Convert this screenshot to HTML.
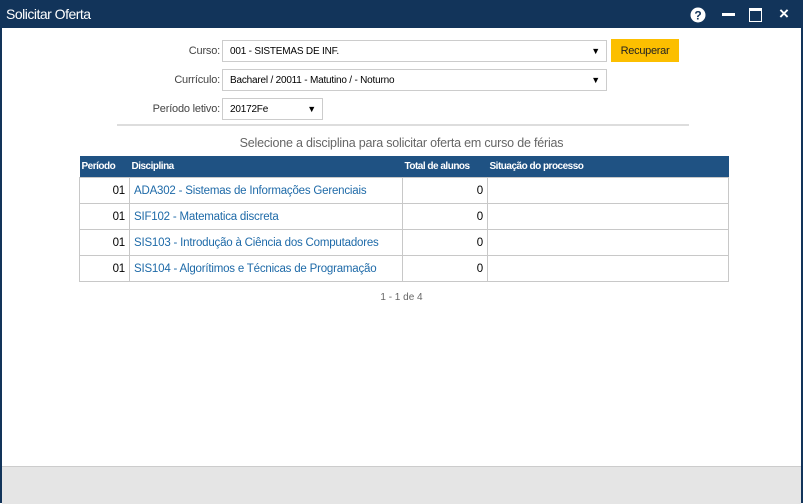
<!DOCTYPE html><html><head><style>
body{margin:0;width:803px;height:503px;overflow:hidden;font-family:"Liberation Sans",sans-serif;background:#fff;position:relative}
.win{position:absolute;left:0;top:0;width:799px;height:503px;border-left:2px solid #12345a;border-right:2px solid #12345a}
.title{position:absolute;left:0;top:0;width:803px;height:28px;background:#12345a;color:#fff;font-size:14px;line-height:28px}
.title span{position:absolute;left:6px;letter-spacing:-0.5px}
.bottom{position:absolute;left:2px;top:466px;width:799px;height:37px;background:#e5e5e5;border-top:1px solid #ccc}
.lbl{position:absolute;font-size:11px;color:#444;text-align:right;width:120px;letter-spacing:-0.2px}
.sel{position:absolute;border:1px solid #ccc;height:22px;font-size:10px;line-height:21px;padding-left:7px;box-sizing:border-box;color:#000;letter-spacing:-0.2px}
.sel i{position:absolute;right:6px;top:0;font-style:normal;font-size:9px}
.btn{position:absolute;left:611px;top:39px;width:68px;height:23px;background:#fcbf00;font-size:11px;line-height:24px;text-align:center;color:#222;letter-spacing:-0.3px}
table{position:absolute;left:79px;top:156px;border-collapse:collapse;font-size:11.5px;table-layout:fixed;width:649px}
th{background:#1f5283;color:#fff;font-weight:bold;font-size:10px;text-align:left;height:21px;padding:0 2px;letter-spacing:-0.5px;white-space:nowrap;overflow:hidden}
td{border:1px solid #c8c8c8;height:25px;padding:0 4px;white-space:nowrap;overflow:hidden;letter-spacing:-0.2px}
td.n{text-align:right}
td a{color:#1e6aa8}
</style></head><body>
<div class="win"></div>
<div class="title"><span>Solicitar Oferta</span>
<svg style="position:absolute;left:690px;top:7px" width="16" height="16"><circle cx="8" cy="8" r="7.5" fill="#fff"/><text x="8" y="12.5" font-size="12" font-weight="bold" text-anchor="middle" fill="#12345a" font-family="Liberation Sans">?</text></svg>
<div style="position:absolute;left:722px;top:13px;width:13px;height:3px;background:#fff"></div>
<div style="position:absolute;left:749px;top:8px;width:13px;height:14px;border:1.5px solid #fff;border-top-width:3px;box-sizing:border-box"></div>
<div style="position:absolute;left:779px;top:0;font-weight:bold;font-size:17px">×</div>
</div>
<div class="lbl" style="left:100px;top:45px">Curso:</div>
<div class="sel" style="left:222px;top:40px;width:385px">001 - SISTEMAS DE INF.<i>▼</i></div>
<div class="btn">Recuperar</div>
<div class="lbl" style="left:100px;top:74px">Currículo:</div>
<div class="sel" style="left:222px;top:69px;width:385px">Bacharel / 20011 - Matutino / - Noturno<i>▼</i></div>
<div class="lbl" style="left:100px;top:103px">Período letivo:</div>
<div class="sel" style="left:222px;top:98px;width:101px">20172Fe<i>▼</i></div>
<div style="position:absolute;left:117px;top:124px;width:572px;height:2px;background:#ddd"></div>
<div style="position:absolute;left:0;width:803px;top:136px;text-align:center;font-size:12.5px;color:#666;letter-spacing:-0.2px">Selecione a disciplina para solicitar oferta em curso de férias</div>
<table>
<colgroup><col style="width:50px"><col style="width:273px"><col style="width:85px"><col style="width:241px"></colgroup>
<tr><th>Período</th><th>Disciplina</th><th>Total de alunos</th><th>Situação do processo</th></tr>
<tr><td class="n">01</td><td><a>ADA302 - Sistemas de Informações Gerenciais</a></td><td class="n">0</td><td></td></tr>
<tr><td class="n">01</td><td><a>SIF102 - Matematica discreta</a></td><td class="n">0</td><td></td></tr>
<tr><td class="n">01</td><td><a>SIS103 - Introdução à Ciência dos Computadores</a></td><td class="n">0</td><td></td></tr>
<tr><td class="n">01</td><td><a>SIS104 - Algorítimos e Técnicas de Programação</a></td><td class="n">0</td><td></td></tr>
</table>
<div style="position:absolute;left:0;width:803px;top:292px;text-align:center;font-size:10px;color:#666">1 - 1 de 4</div>
<div class="bottom"></div>
</body></html>
